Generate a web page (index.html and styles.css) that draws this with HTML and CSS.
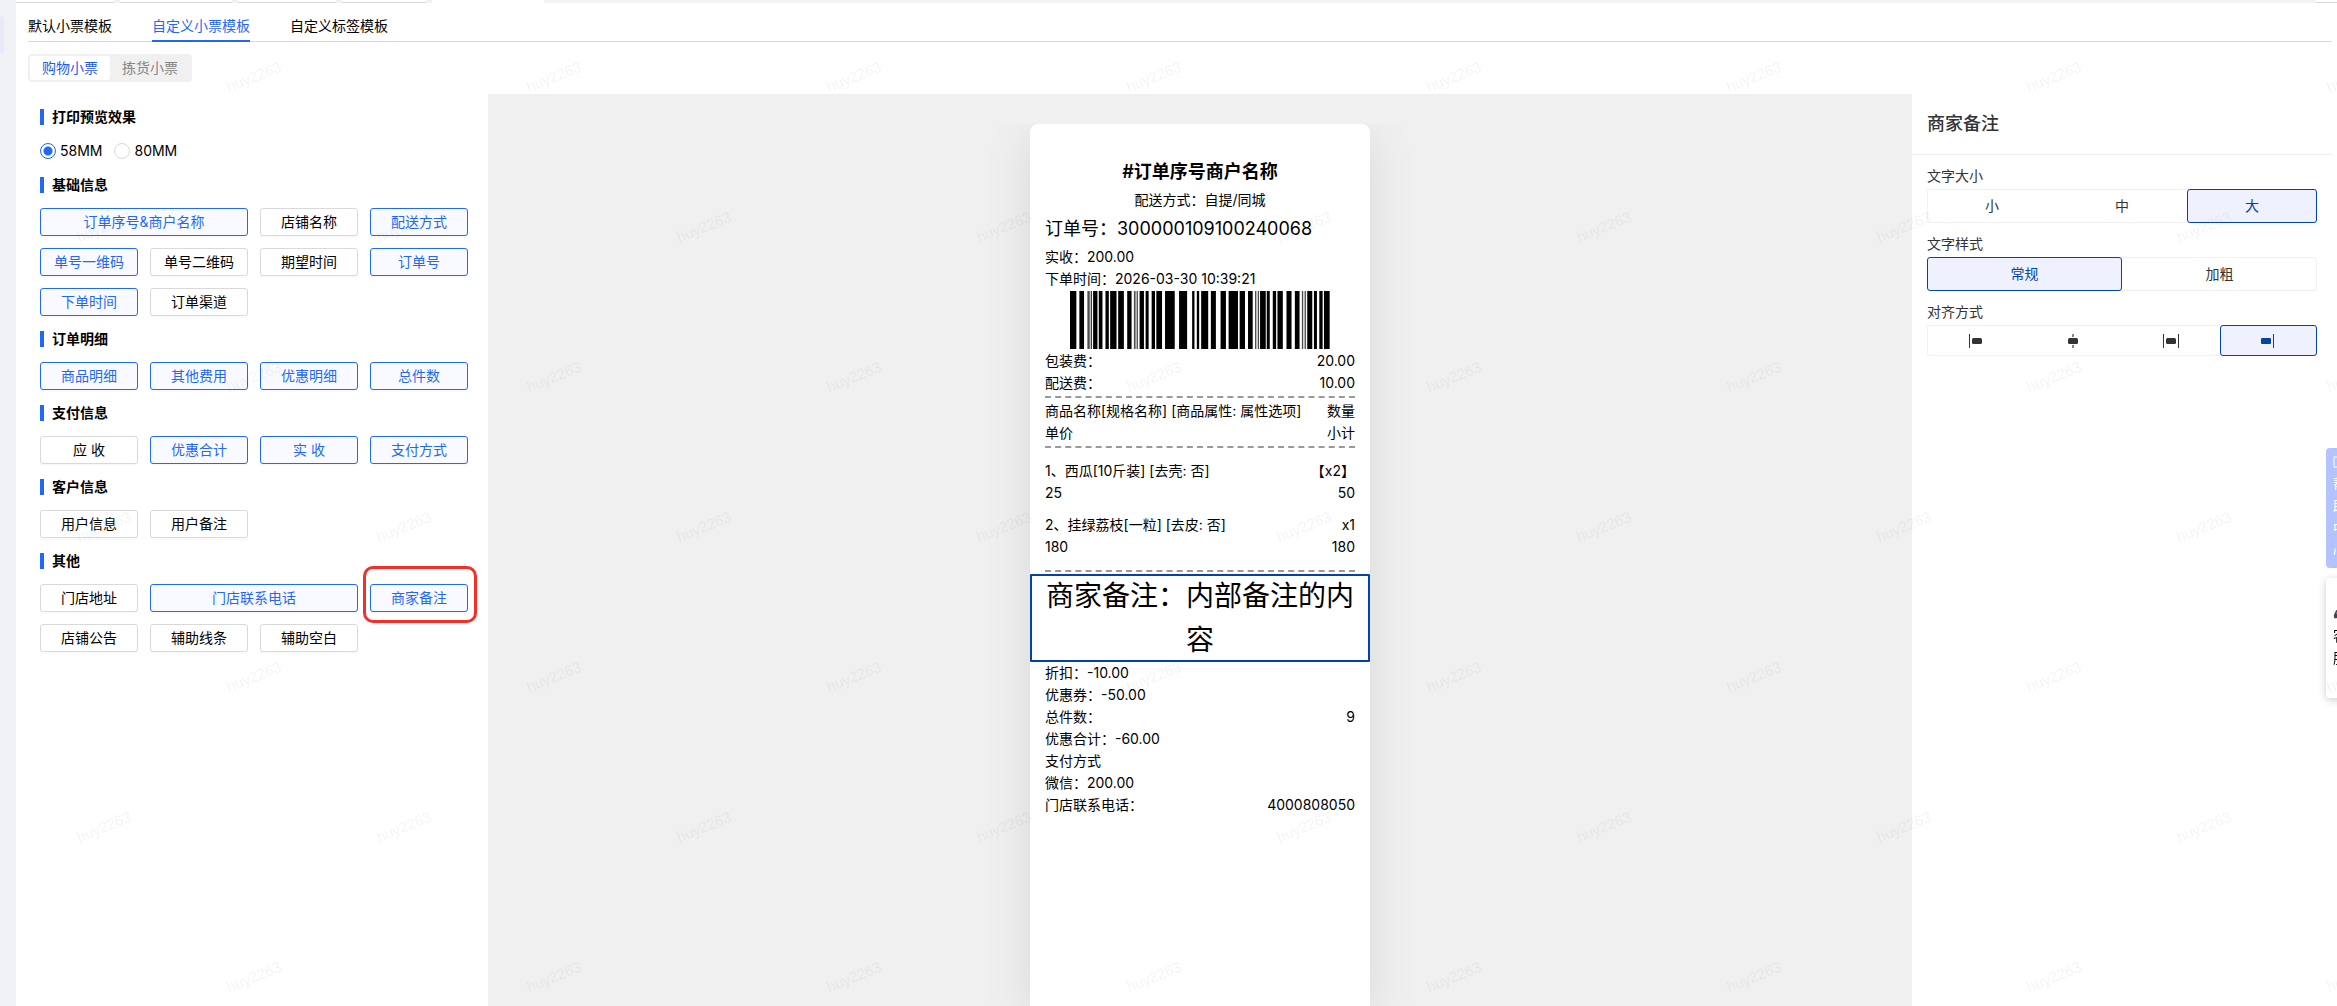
FILE: index.html
```html
<!DOCTYPE html>
<html lang="zh-CN">
<head>
    <meta charset="UTF-8">
    <meta name="viewport" content="width=device-width, initial-scale=1.0">
    <title>自定义小票模板</title>
    <link rel="stylesheet" href="styles.css">
</head>
<body>
    <div class="app">
        <aside class="sidebar"><div class="sidebar-item"></div></aside>

        <div class="page">
            <!-- Opened page tabs -->
            <div class="page-tabs">
                <span class="page-tab w98"></span>
                <span class="page-tab w112"></span>
                <span class="page-tab w98"></span>
                <span class="page-tab w84"></span>
                <span class="page-tab w112 current"></span>
                <span class="page-tab rest"></span>
                <span class="page-tab more"></span>
            </div>

            <nav class="nav">
                <a href="#">默认小票模板</a>
                <a href="#" class="active">自定义小票模板</a>
                <a href="#">自定义标签模板</a>
            </nav>

            <div class="switch">
                <button class="active">购物小票</button>
                <button>拣货小票</button>
            </div>

            <div class="editor">
                <!-- Components -->
                <section class="components">
                    <h3>打印预览效果</h3>
                    <div class="radios">
                        <label><input type="radio" name="paper" checked>58MM</label>
                        <label><input type="radio" name="paper">80MM</label>
                    </div>

                    <h3>基础信息</h3>
                    <div class="grid">
                        <button class="on span2">订单序号&amp;商户名称</button>
                        <button>店铺名称</button>
                        <button class="on">配送方式</button>
                        <button class="on">单号一维码</button>
                        <button>单号二维码</button>
                        <button>期望时间</button>
                        <button class="on">订单号</button>
                        <button class="on">下单时间</button>
                        <button>订单渠道</button>
                    </div>

                    <h3>订单明细</h3>
                    <div class="grid">
                        <button class="on">商品明细</button>
                        <button class="on">其他费用</button>
                        <button class="on">优惠明细</button>
                        <button class="on">总件数</button>
                    </div>

                    <h3>支付信息</h3>
                    <div class="grid">
                        <button>应 收</button>
                        <button class="on">优惠合计</button>
                        <button class="on">实 收</button>
                        <button class="on">支付方式</button>
                    </div>

                    <h3>客户信息</h3>
                    <div class="grid">
                        <button>用户信息</button>
                        <button>用户备注</button>
                    </div>

                    <h3>其他</h3>
                    <div class="grid">
                        <button>门店地址</button>
                        <button class="on span2">门店联系电话</button>
                        <button class="on marked">商家备注</button>
                        <button>店铺公告</button>
                        <button>辅助线条</button>
                        <button>辅助空白</button>
                    </div>
                </section>

                <!-- Receipt preview -->
                <main class="preview">
                    <div class="canvas">
                        <div class="receipt">
                            <div class="large title">#订单序号商户名称</div>
                            <div class="center">配送方式：自提/同城</div>
                            <div class="large">订单号：300000109100240068</div>
                            <div>实收：200.00</div>
                            <div>下单时间：2026-03-30 10:39:21</div>
                            <svg class="barcode" viewBox="0 0 777 58" preserveAspectRatio="none" role="img" aria-label="单号一维码">
                                <path d="M0 0h19v58h-19zM28 0h14v58h-14zM62 0h3v58h-3zM69 0h13v58h-13zM86 0h11v58h-11zM106 0h10v58h-10zM120 0h19v58h-19zM144 0h17v58h-17zM171 0h13v58h-13zM208 0h13v58h-13zM226 0h9v58h-9zM244 0h10v58h-10zM258 0h17v58h-17zM284 0h29v58h-29zM326 0h24v58h-24zM365 0h7v58h-7zM379 0h7v58h-7zM392 0h21v58h-21zM421 0h15v58h-15zM450 0h16v58h-16zM474 0h28v58h-28zM507 0h16v58h-16zM532 0h14v58h-14zM568 0h17v58h-17zM588 0h9v58h-9zM606 0h10v58h-10zM620 0h16v58h-16zM647 0h15v58h-15zM672 0h14v58h-14zM709 0h15v58h-15zM729 0h9v58h-9zM745 0h10v58h-10zM759 0h17v58h-17z"/>
                                <path opacity=".7" d="M52 0h7v58h-7zM191 0h5v58h-5zM199 0h4v58h-4zM553 0h4v58h-4zM561 0h4v58h-4zM693 0h4v58h-4zM701 0h4v58h-4z"/>
                            </svg>
                            <div class="row"><span>包装费：</span><span>20.00</span></div>
                            <div class="row"><span>配送费：</span><span>10.00</span></div>
                            <hr>
                            <div class="row"><span>商品名称[规格名称] [商品属性: 属性选项]</span><span>数量</span></div>
                            <div class="row"><span>单价</span><span>小计</span></div>
                            <hr>
                            <div class="goods">
                                <div>
                                    <div class="row"><span>1、西瓜[10斤装] [去壳: 否]</span><span>【x2】</span></div>
                                    <div class="row"><span>25</span><span>50</span></div>
                                </div>
                                <div>
                                    <div class="row"><span>2、挂绿荔枝[一粒] [去皮: 否]</span><span>x1</span></div>
                                    <div class="row"><span>180</span><span>180</span></div>
                                </div>
                            </div>
                            <hr>
                            <div class="remark">商家备注：内部备注的内容</div>
                            <div>折扣：-10.00</div>
                            <div>优惠券：-50.00</div>
                            <div class="row"><span>总件数：</span><span>9</span></div>
                            <div>优惠合计：-60.00</div>
                            <div>支付方式</div>
                            <div>微信：200.00</div>
                            <div class="row"><span>门店联系电话：</span><span>4000808050</span></div>
                        </div>
                    </div>
                </main>

                <!-- Settings of the selected component -->
                <aside class="settings">
                    <h2>商家备注</h2>
                    <div class="fields">
                        <div class="field">
                            <span id="size">文字大小</span>
                            <div class="group" role="group" aria-labelledby="size">
                                <button>小</button><button>中</button><button class="on">大</button>
                            </div>
                        </div>
                        <div class="field">
                            <span id="style">文字样式</span>
                            <div class="group" role="group" aria-labelledby="style">
                                <button class="on">常规</button><button>加粗</button>
                            </div>
                        </div>
                        <div class="field">
                            <span id="align">对齐方式</span>
                            <div class="group short" role="group" aria-labelledby="align">
                                <button aria-label="左对齐"><svg width="18" height="14"><path d="M2 0h1v14h-1z"/><rect x="5" y="4" width="10" height="6" rx="1.500"/></svg></button>
                                <button aria-label="居中"><svg width="18" height="14"><path opacity=".6" d="M8 0h2v3h-2zM8 11h2v3h-2z"/><rect x="4" y="4" width="10" height="6" rx="1.500"/></svg></button>
                                <button aria-label="两端对齐"><svg width="18" height="14"><path d="M1 0h1v14h-1zM16 0h1v14h-1z"/><rect x="4" y="4" width="10" height="6" rx="1.500"/></svg></button>
                                <button class="on" aria-label="右对齐"><svg width="18" height="14"><path d="M14 0h1v14h-1z"/><rect x="2" y="4" width="10" height="6" rx="1"/></svg></button>
                            </div>
                        </div>
                    </div>
                </aside>
            </div>
        </div>
    </div>

    <!-- Floating help, half hidden behind the window edge -->
    <div class="float">
        <a href="#" class="help">
            <svg width="14" height="14" viewBox="0 0 14 14"><rect x="1" y="2" width="12" height="10" fill="none" stroke="currentColor"/></svg>
            帮助中心
        </a>
        <a href="#" class="service">
            <svg width="14" height="14" viewBox="0 0 16 16"><path d="M3 8a5 5 0 0 1 10 0" fill="none" stroke="#445" stroke-width="2"/><rect x="1" y="7" width="4" height="6" rx="2" fill="#445"/><rect x="11" y="7" width="4" height="6" rx="2" fill="#445"/></svg>
            客服
        </a>
    </div>

    <svg class="watermark" aria-hidden="true">
        <defs>
            <pattern id="mark" width="300" height="300" patternUnits="userSpaceOnUse">
                <text transform="translate(254 77) rotate(-22)" y="5">huy2263</text>
                <text transform="translate(104 227) rotate(-22)" y="5">huy2263</text>
            </pattern>
        </defs>
        <rect width="100%" height="100%" fill="url(#mark)"/>
    </svg>
</body>
</html>
```
FILE: styles.css
```css
* { box-sizing: border-box; }
body { margin: 0; font: 14px/22px Inter, "Noto Sans CJK SC", sans-serif; color: #000; background: #fff; overflow-x: hidden; }
button { font: inherit; color: inherit; cursor: pointer; padding: 0; }
a { color: inherit; text-decoration: none; }
h2, h3 { margin: 0; }

.app { display: flex; min-height: 100vh; }
.sidebar { width: 16px; flex: none; background: #f1f2f5; padding-top: 16px; }
.sidebar-item { width: 4px; height: 38px; background: #e9eaf8; border-radius: 0 6px 6px 0; }
.page { flex: 1; min-width: 0; display: flex; flex-direction: column; }

.page-tabs { display: flex; gap: 6px; height: 3px; background: #f1f2f5; }
.page-tab { background: #fff; border-bottom: 1px solid #d9d9d9; }
.page-tab.current { border-bottom: 0; }
.page-tab.rest { flex: 1; margin: 0 -6px; background: #f1f2f5; border-bottom: 0; }
.page-tab.more { width: 21px; }
.w84 { width: 84px; }
.w98 { width: 98px; }
.w112 { width: 112px; }

.nav { display: flex; gap: 40px; height: 39px; margin: 0 5px 0 12px; box-shadow: inset 0 -1px #d9d9d9; }
.nav a { padding-top: 12px; }
.nav .active { color: #1f69f6; border-bottom: 2px solid #1f69f6; }

.switch { display: flex; align-self: flex-start; margin: 12px; padding: 2px; background: #f0f0f0; border-radius: 4px; }
.switch button { height: 24px; padding: 0 12px; border: 0; border-radius: 3px; background: none; color: #858585; }
.switch .active { background: #fff; color: #1f5ae8; }

.editor { flex: 1; display: flex; }

.components { width: 472px; flex: none; padding: 12px 20px 12px 24px; display: flex; flex-direction: column; gap: 12px; }
.components h3 { display: flex; align-items: center; gap: 8px; font-size: 14px; font-weight: 600; }
.components h3::before { content: ""; width: 4px; height: 16px; background: #1f69f6; }
.radios { display: flex; gap: 12px; }
.radios label { display: flex; align-items: center; gap: 4px; }
.radios input { appearance: none; width: 16px; height: 16px; margin: 0; border: 1px solid #d9d9d9; border-radius: 50%; }
.radios input:checked { border-color: #1f69f6; background: radial-gradient(#1f69f6 4px, #fff 5px); }
.grid { display: grid; grid-template-columns: repeat(4, 98px); gap: 12px; }
.grid button { position: relative; height: 28px; border: 1px solid #d9d9d9; border-radius: 3px; background: #fff; box-shadow: 0 2px 0 rgba(0, 0, 0, .02); }
.grid .on { color: #1f69f6; border-color: #1f69f6; background: #f8faff; }
.grid .span2 { grid-column: span 2; }
.marked::after { content: ""; position: absolute; inset: -19px -10px -12px -8px; border: 3px solid #f62e28; border-radius: 10px; }

.preview { flex: 1; padding-top: 30px; background: #f0f0f0; display: flex; }
.canvas { flex: 1; display: flex; justify-content: center; overflow: hidden; }
.receipt { width: 340px; padding: 30px 15px; background: #fff; border-radius: 8px 8px 0 0; box-shadow: 0 10px 50px rgba(0, 0, 0, .1); }
.large { font-size: 18px; line-height: 35px; }
.title { font-weight: 600; text-align: center; }
.center { text-align: center; }
.row { display: flex; justify-content: space-between; }
.receipt hr { margin: 2px 0; border: 0; border-top: 2px dashed #999; }
.barcode { display: block; width: 260px; height: 58px; margin: 1px auto; }
.goods { display: flex; flex-direction: column; gap: 10px; padding: 10px 0; }
.remark { margin: 0 -15px; padding: 0 15px; font-size: 28px; line-height: 44px; text-align: center; box-shadow: inset 0 0 0 2px #0044a8; border-radius: 1px; }

.settings { width: 425px; flex: none; padding-right: 5px; color: #333; }
.settings h2 { height: 61px; padding: 0 15px; font-size: 18px; font-weight: 500; line-height: 60px; border-bottom: 1px solid #eee; }
.fields { display: flex; flex-direction: column; gap: 10px; padding: 10px 15px; }
.field { display: flex; flex-direction: column; gap: 2px; }
.group { display: flex; height: 34px; border-radius: 3px; box-shadow: inset 0 0 0 1px #f0f0f0; }
.group.short { height: 31px; }
.group button { flex: 1; display: flex; align-items: center; justify-content: center; border: 1px solid transparent; border-radius: 3px; background: none; }
.group .on { color: #0044a8; border-color: #0044a8; background: #eff2fe; }
.group svg { fill: currentColor; }

.float { position: fixed; top: 448px; right: -17px; width: 28px; display: flex; flex-direction: column; gap: 10px; }
.float a { height: 120px; padding: 4px 7px; display: flex; flex-direction: column; align-items: center; justify-content: center; gap: 4px; border-radius: 4px; background: #fff; box-shadow: 0 2px 8px rgba(0, 0, 0, .2); word-break: break-all; }
.float .help { color: #fff; background: #b3c3ff; box-shadow: none; }

.watermark { position: fixed; inset: 0; width: 100%; height: 100%; pointer-events: none; }
.watermark text { font: 15px "Liberation Sans", sans-serif; text-anchor: middle; fill: rgba(0, 0, 0, .04); }
```
